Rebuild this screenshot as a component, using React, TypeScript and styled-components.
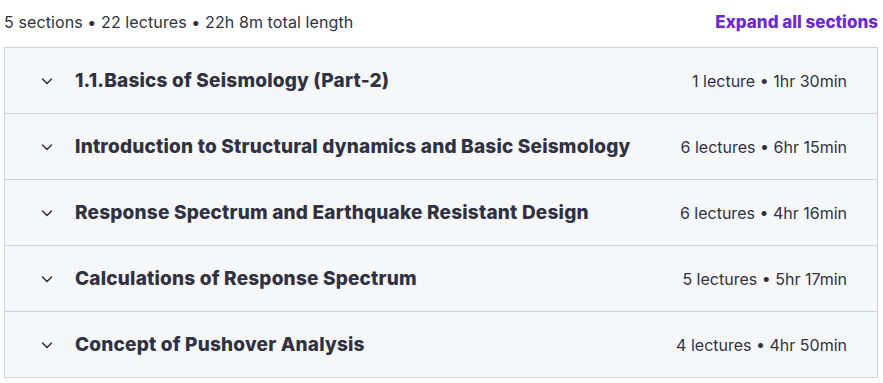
import styled, { createGlobalStyle } from 'styled-components';

const GlobalStyle = createGlobalStyle`
  body {
    margin: 0;
    background: #ffffff;
    font-family: Inter, "Noto Sans", sans-serif;
    color: #2d2f31;
  }
`;

interface Section {
  title: string;
  lectures: number;
  length: string;
}

const sections: Section[] = [
  { title: '1.1.Basics of Seismology (Part-2)', lectures: 1, length: '1hr 30min' },
  { title: 'Introduction to Structural dynamics and Basic Seismology', lectures: 6, length: '6hr 15min' },
  { title: 'Response Spectrum and Earthquake Resistant Design', lectures: 6, length: '4hr 16min' },
  { title: 'Calculations of Response Spectrum', lectures: 5, length: '5hr 17min' },
  { title: 'Concept of Pushover Analysis', lectures: 4, length: '4hr 50min' },
];

function Chevron() {
  return (
    <svg width="12" height="8" viewBox="0 0 12 8" fill="none">
      <path d="M1.5 2l4.5 4.5 4.5-4.5" stroke="#303141" strokeWidth="1.5" strokeLinecap="round" strokeLinejoin="round" />
    </svg>
  );
}

export default function App() {
  return (
    <Wrapper>
      <GlobalStyle />
      <Header>
        <Summary>5 sections • 22 lectures • 22h 8m total length</Summary>
        <ExpandButton>Expand all sections</ExpandButton>
      </Header>
      <Accordion>
        {sections.map((s) => (
          <Row key={s.title}>
            <Toggle>
              <Chevron />
            </Toggle>
            <Title>{s.title}</Title>
            <Meta>
              {s.lectures} {s.lectures === 1 ? 'lecture' : 'lectures'} • {s.length}
            </Meta>
          </Row>
        ))}
      </Accordion>
    </Wrapper>
  );
}

const Wrapper = styled.div`
  width: 883px;
  padding: 0 5px 0 4px;
  box-sizing: border-box;
`;

const Header = styled.div`
  display: flex;
  align-items: center;
  justify-content: space-between;
  height: 47px;
  padding-bottom: 3px;
  box-sizing: border-box;
`;

const Summary = styled.span`
  font-size: 16px;
  color: #303141;
  letter-spacing: 0.1px;
`;

const ExpandButton = styled.button`
  border: none;
  background: none;
  padding: 0;
  font-family: inherit;
  font-size: 17px;
  font-weight: 800;
  color: #6d28d2;
  cursor: pointer;
`;

const Accordion = styled.div`
  border: 1px solid #d1d2e0;
  border-bottom: none;
`;

const Row = styled.div`
  display: flex;
  align-items: center;
  height: 65px;
  padding: 0 30px 0 36px;
  background: #f6f7f9;
  border-bottom: 1px solid #d1d2e0;
`;

const Toggle = styled.span`
  display: flex;
  width: 12px;
  margin-right: 22px;
`;

const Title = styled.span`
  flex: 1;
  font-size: 19px;
  font-weight: 800;
  letter-spacing: 0.2px;
  color: #303141;
`;

const Meta = styled.span`
  font-size: 16px;
  color: #303141;
`;
